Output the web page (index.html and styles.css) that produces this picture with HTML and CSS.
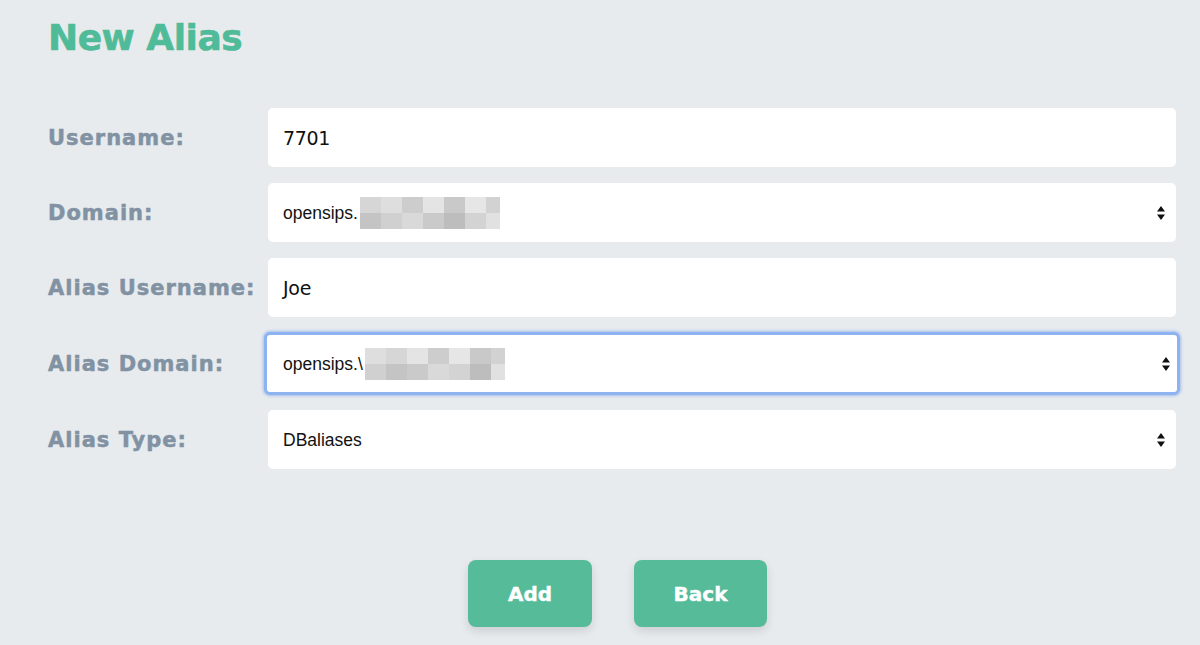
FILE: index.html
```html
<!DOCTYPE html>
<html>
<head>
<meta charset="utf-8">
<link rel="stylesheet" href="styles.css">
</head>
<body>
<div class="page">
  <h1 class="title">New Alias</h1>
  <form class="form">
    <label class="label">Username:</label>
    <div class="field"><span class="val val-input">7701</span></div>

    <label class="label">Domain:</label>
    <div class="field select">
      <span class="val">opensips.</span><span class="blur"><i class="b1"></i><i class="b2"></i><i class="b3"></i><i class="b4"></i><i class="b5"></i><i class="b6"></i><i class="b7"></i></span>
      <span class="arrows"><svg width="10" height="16" viewBox="0 0 10 16"><path d="M5 1 L9 6.5 H1 Z M5 15 L9 9.5 H1 Z" fill="#111"/></svg></span>
    </div>

    <label class="label">Alias Username:</label>
    <div class="field"><span class="val val-input">Joe</span></div>

    <label class="label">Alias Domain:</label>
    <div class="field select focus">
      <span class="val">opensips.\</span><span class="blur"><i class="b2"></i><i class="b1"></i><i class="b4"></i><i class="b3"></i><i class="b6"></i><i class="b5"></i><i class="b7"></i></span>
      <span class="arrows"><svg width="10" height="16" viewBox="0 0 10 16"><path d="M5 1 L9 6.5 H1 Z M5 15 L9 9.5 H1 Z" fill="#111"/></svg></span>
    </div>

    <label class="label">Alias Type:</label>
    <div class="field select">
      <span class="val">DBaliases</span>
      <span class="arrows"><svg width="10" height="16" viewBox="0 0 10 16"><path d="M5 1 L9 6.5 H1 Z M5 15 L9 9.5 H1 Z" fill="#111"/></svg></span>
    </div>
  </form>
  <div class="actions">
    <button class="btn btn-add" type="button">Add</button>
    <button class="btn btn-back" type="button">Back</button>
  </div>
</div>
</body>
</html>
```

FILE: styles.css
```css
html, body {
  margin: 0;
  padding: 0;
  background: #e8ebee;
}
.page {
  width: 1200px;
  height: 645px;
  box-sizing: border-box;
  padding: 14px 24px 0 48px;
  font-family: "DejaVu Sans", "Open Sans", sans-serif;
  overflow: hidden;
}
.title {
  margin: 0;
  font-size: 36px;
  font-weight: 700;
  color: #4fbb98;
  letter-spacing: -0.5px;
  line-height: 48px;
  -webkit-text-stroke: 0.6px #4fbb98;
}
.form {
  margin-top: 46px;
  display: grid;
  grid-template-columns: 220px 1fr;
  row-gap: 16px;
  align-items: center;
}
.label {
  font-size: 21px;
  font-weight: 700;
  color: #8192a3;
  letter-spacing: 1px;
  -webkit-text-stroke: 0.5px #8192a3;
  white-space: nowrap;
}
.field {
  height: 59px;
  background: #ffffff;
  border-radius: 5px;
  display: flex;
  align-items: center;
  padding: 0 16px 0 15px;
  box-sizing: border-box;
  position: relative;
}
.val {
  font-family: "Liberation Sans", Arial, sans-serif;
  font-size: 17.5px;
  color: #111;
  white-space: pre;
}
.val-input {
  font-family: "DejaVu Sans", sans-serif;
  font-size: 19px;
  letter-spacing: -0.3px;
}
.select .val { padding-top: 1px; }
.focus {
  height: 63px;
  margin: -1px -4px;
  padding-left: 16px;
  border: 3px solid #8db3f0;
  box-shadow: 0 0 3px 1px rgba(120,160,235,0.6);
  border-radius: 6px;
  padding-right: 12px;
}
.blur {
  display: flex;
  height: 32px;
  margin-left: 2px;
}
.blur i {
  display: block;
  width: 21px;
  height: 32px;
}
.blur .b1 { background: linear-gradient(#d6d6d6 50%, #c4c4c4 50%); }
.blur .b2 { background: linear-gradient(#dedede 50%, #d0d0d0 50%); }
.blur .b3 { background: linear-gradient(#cdcdcd 50%, #d9d9d9 50%); }
.blur .b4 { background: linear-gradient(#e4e4e4 50%, #cacaca 50%); }
.blur .b5 { background: linear-gradient(#c9c9c9 50%, #bdbdbd 50%); }
.blur .b6 { background: linear-gradient(#e6e6e6 50%, #d3d3d3 50%); }
.blur .b7 { background: linear-gradient(#d2d2d2 50%, #e1e1e1 50%); width: 14px; }
.arrows {
  margin-left: auto;
  display: flex;
  align-items: center;
  margin-right: -6px;
}
.actions {
  margin-top: 91px;
  display: flex;
  justify-content: center;
  gap: 42px;
  margin-left: 11px;
}
.btn {
  height: 67px;
  border: none;
  border-radius: 8px;
  background: #55bb99;
  color: #ffffff;
  font-family: "DejaVu Sans", sans-serif;
  font-weight: 700;
  font-size: 20px;
  -webkit-text-stroke: 0.4px #ffffff;
  box-shadow: 0 4px 10px rgba(0,0,0,0.12);
}
.btn-add { width: 124px; }
.btn-back { width: 133px; }
```
